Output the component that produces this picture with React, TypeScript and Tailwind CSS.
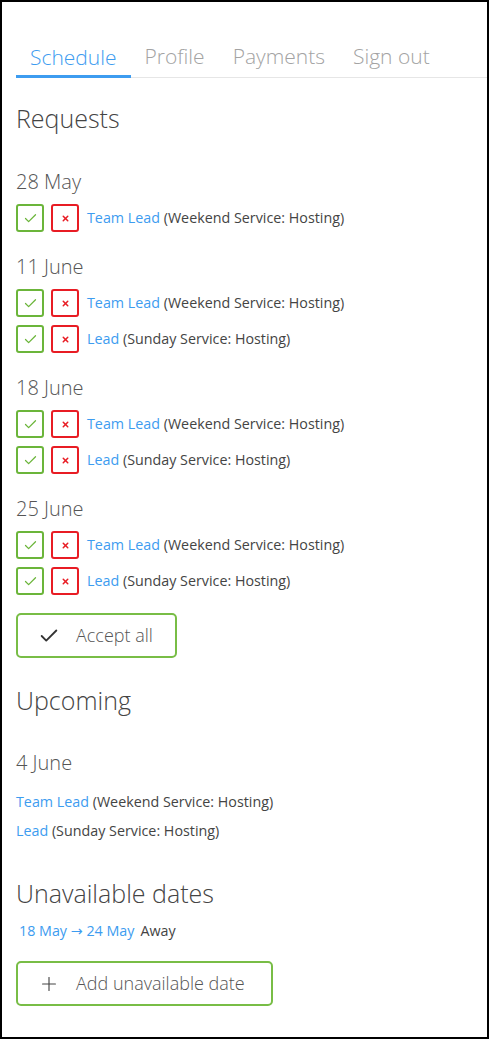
import React from "react";
import { Check, Plus, X } from "lucide-react";

const font = { fontFamily: '"Open Sans", "Noto Sans", sans-serif' };

const tabs = ["Schedule", "Profile", "Payments", "Sign out"];

type Item = { role: string; service: string };

const requests: { date: string; items: Item[] }[] = [
  { date: "28 May", items: [{ role: "Team Lead", service: "Weekend Service: Hosting" }] },
  {
    date: "11 June",
    items: [
      { role: "Team Lead", service: "Weekend Service: Hosting" },
      { role: "Lead", service: "Sunday Service: Hosting" },
    ],
  },
  {
    date: "18 June",
    items: [
      { role: "Team Lead", service: "Weekend Service: Hosting" },
      { role: "Lead", service: "Sunday Service: Hosting" },
    ],
  },
  {
    date: "25 June",
    items: [
      { role: "Team Lead", service: "Weekend Service: Hosting" },
      { role: "Lead", service: "Sunday Service: Hosting" },
    ],
  },
];

const RequestRow = ({ item }: { item: Item }) => (
  <div className="flex h-[28px] items-center">
    <button className="flex h-[28px] w-[28px] items-center justify-center rounded-[3px] border-2 border-[#6bb53a]">
      <Check size={15} strokeWidth={2} className="text-[#6bb53a]" />
    </button>
    <button className="ml-[7px] flex h-[28px] w-[28px] items-center justify-center rounded-[3px] border-2 border-[#e81c24]">
      <X size={9} strokeWidth={4} className="text-[#e81c24]" />
    </button>
    <span className="ml-[8px] text-[14.3px] text-[#444]">
      <span className="text-[#3d9cf0]">{item.role}</span> ({item.service})
    </span>
  </div>
);

const OutlineButton = ({ icon, label, width }: { icon: React.ReactNode; label: string; width: string }) => (
  <button
    className={`flex h-[45px] items-center rounded-[5px] border-2 border-[#78bd46] pl-[20px] text-[18px] font-light text-[#555] ${width}`}
  >
    {icon}
    <span className="ml-[16px]">{label}</span>
  </button>
);

export default function App() {
  return (
    <div style={font} className="h-[1039px] w-[489px] border-2 border-black bg-white">
      <div className="pl-[14px]">
        <nav className="mt-[38px] flex h-[38px] border-b border-[#e6e6e6]">
          {tabs.map((t, i) => (
            <div
              key={t}
              className={
                i === 0
                  ? "-mb-px flex items-center border-b-[3px] border-[#3d9cf0] px-[14px] text-[21px] font-light text-[#3d9cf0]"
                  : "flex items-center px-[14px] pb-[3px] text-[21px] font-light text-[#a3a3a3]"
              }
            >
              {t}
            </div>
          ))}
        </nav>

        <h2 className="mt-[22px] h-[36px] text-[25px] leading-[36px] font-light text-[#444]">Requests</h2>

        <div className="mt-[32px] flex flex-col gap-[21px]">
          {requests.map((g) => (
            <div key={g.date}>
              <h3 className="h-[28px] text-[20px] leading-[28px] font-light text-[#555]">{g.date}</h3>
              <div className="mt-[8px] flex flex-col gap-[8px]">
                {g.items.map((item, i) => (
                  <RequestRow key={i} item={item} />
                ))}
              </div>
            </div>
          ))}
        </div>

        <div className="mt-[18px]">
          <OutlineButton
            width="w-[161px]"
            label="Accept all"
            icon={<Check size={22} strokeWidth={2} className="text-[#333]" />}
          />
        </div>

        <h2 className="mt-[24px] h-[36px] text-[25px] leading-[36px] font-light text-[#444]">Upcoming</h2>

        <h3 className="mt-[31px] h-[28px] text-[20px] leading-[28px] font-light text-[#555]">4 June</h3>
        <div className="mt-[10px] flex flex-col">
          <div className="h-[29px] text-[14.3px] leading-[29px] text-[#444]">
            <span className="text-[#3d9cf0]">Team Lead</span> (Weekend Service: Hosting)
          </div>
          <div className="h-[29px] text-[14.3px] leading-[29px] text-[#444]">
            <span className="text-[#3d9cf0]">Lead</span> (Sunday Service: Hosting)
          </div>
        </div>

        <h2 className="mt-[30px] h-[36px] text-[25px] leading-[36px] font-light text-[#444]">Unavailable dates</h2>
        <div className="mt-[9px] h-[22px] pl-[3px] text-[14.3px] leading-[22px]">
          <span className="text-[#3d9cf0]">
            18 May <span style={{ fontFamily: '"DejaVu Sans", sans-serif' }}>→</span> 24 May
          </span>
          <span className="ml-[6px] text-[#444]">Away</span>
        </div>

        <div className="mt-[19px]">
          <OutlineButton
            width="w-[257px]"
            label="Add unavailable date"
            icon={<Plus size={22} strokeWidth={1.25} className="text-[#444]" />}
          />
        </div>
      </div>
    </div>
  );
}
